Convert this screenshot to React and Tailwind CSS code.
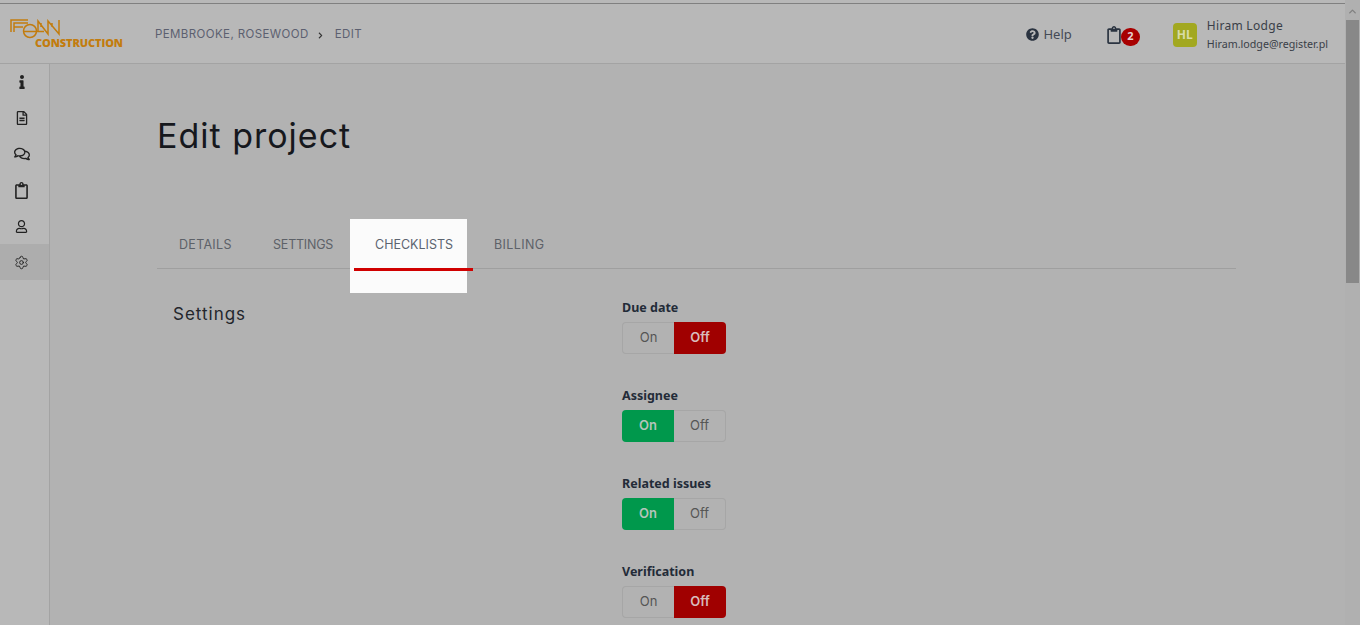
import { Settings, ChevronUp } from "lucide-react";
import { FaInfo, FaRegFileAlt, FaRegComments, FaRegClipboard, FaRegUser, FaQuestionCircle, FaChevronRight } from "react-icons/fa";

const sideItems = [
  { icon: FaRegFileAlt, size: 14 },
  { icon: FaRegComments, size: 16 },
  { icon: FaRegClipboard, size: 17 },
  { icon: FaRegUser, size: 13 },
];

const fields = [
  { label: "Due date", on: false },
  { label: "Assignee", on: true },
  { label: "Related issues", on: true },
  { label: "Verification", on: false },
];

function Logo() {
  return (
    <div className="w-[155px] pl-[10px] shrink-0 mt-[1px]">
      <svg width="52" height="20" viewBox="0 0 52 20" fill="none" stroke="#c27c0e" strokeWidth="1.5" className="block">
        <path d="M1 13V1h17M4 13V4h14M4 8h9" />
        <circle cx="20" cy="12" r="6.5" />
        <path d="M13 12.5h21" />
        <path d="M28 12V2l10 13V2l11 13V1M31 8V4M42 8V4" />
      </svg>
      <div className="pl-[25px] -mt-[2px] font-['Open_Sans',sans-serif] font-extrabold text-[11px] leading-[12px] tracking-[-0.1px] text-[#c27c0e]">
        CONSTRUCTION
      </div>
    </div>
  );
}

function Toggle({ label, on }) {
  return (
    <div className="h-[87px]">
      <div className="text-[12.5px] leading-5 font-bold text-[#232b38] mt-[1px] mb-[4px]">{label}</div>
      <div className="flex w-[104px] h-8 text-[13px] font-['Inter',sans-serif]">
        <div className={`w-[52px] flex items-center justify-center rounded-l ${on ? "bg-[#00984c] text-[#b4c4ba] font-semibold" : "border border-[#a6a6a6] border-r-0 text-[#555555]"}`}>
          On
        </div>
        <div className={`w-[52px] flex items-center justify-center rounded-r ${on ? "border border-[#a6a6a6] border-l-0 text-[#555555]" : "bg-[#a00000] text-[#d8bcbc] font-semibold"}`}>
          Off
        </div>
      </div>
    </div>
  );
}

export default function App() {
  return (
    <div className="h-[625px] overflow-hidden flex bg-[#b2b2b2] font-['Noto_Sans',sans-serif]">
      <div className="flex-1 min-w-0 flex flex-col">
        <div className="h-1 bg-[#b8b8b8] border-b border-[#808080]" />
        <header className="h-[60px] shrink-0 flex items-center border-b border-[#a3a3a3] bg-[#b8b8b8] pr-[17px]">
          <Logo />
          <div className="flex items-center font-['Inter',sans-serif] text-[11.5px] tracking-[0.4px] text-[#5c6070] mt-[3px]">
            <span>PEMBROOKE, ROSEWOOD</span>
            <FaChevronRight size={7} className="ml-[8px] text-[#333333]" />
            <span className="ml-[11px]">EDIT</span>
          </div>
          <div className="ml-auto flex items-center mt-[2px]">
            <FaQuestionCircle size={13} className="text-[#2a3340]" />
            <span className="ml-[4px] text-[13px] text-[#444a55]">Help</span>
            <div className="relative ml-[33px] mr-[33px]">
              <FaRegClipboard size={18} className="text-[#2a3340]" />
              <span className="absolute -right-[17px] top-[2px] w-[19px] h-[18px] rounded-full bg-[#a80000] text-[#e5d0d0] text-[11px] font-bold flex items-center justify-center">
                2
              </span>
            </div>
            <div className="ml-[17px] w-6 h-6 rounded bg-[#a2a820] text-[#d8dca8] text-xs font-bold flex items-center justify-center">
              HL
            </div>
            <div className="ml-[10px] text-[#3a3f48]">
              <div className="text-xs leading-[17px] tracking-[0.3px]">Hiram Lodge</div>
              <div className="text-[10.7px] leading-[17px] mt-[2px]">Hiram.lodge@register.pl</div>
            </div>
          </div>
        </header>
        <div className="flex-1 flex min-h-0">
          <aside className="w-[50px] shrink-0 border-r border-[#a3a3a3] bg-[#b8b8b8] text-[#222222]">
            <div className="h-9 flex items-center justify-center pr-[6px]">
              <FaInfo size={14} />
            </div>
            {sideItems.map(({ icon: Icon, size }, i) => (
              <div key={i} className="h-9 flex items-center justify-center pr-[6px]">
                <Icon size={size} />
              </div>
            ))}
            <div className="h-9 flex items-center justify-center pr-[6px] bg-[#adadad]">
              <Settings size={15} strokeWidth={1.5} />
            </div>
          </aside>
          <main className="flex-1 min-w-0 pl-[107px] pr-[109px]">
            <h1 className="mt-[50px] text-[34px] leading-[44px] tracking-[1px] font-['Inter',sans-serif] text-[#16181d]">Edit project</h1>
            <nav className="relative mt-[61px] h-[50px] border-b border-[#9f9f9f] font-['Inter',sans-serif] text-[12.5px] text-[#5d6168]">
              <span className="absolute left-[22px] top-[17px] tracking-[0.3px]">DETAILS</span>
              <span className="absolute left-[116px] top-[17px] tracking-[-0.2px]">SETTINGS</span>
              <div className="absolute left-[193px] top-0 w-[117px] h-[74px] bg-[#fbfbfb] text-[#5c6470]">
                <span className="absolute left-[25px] top-[17px]">CHECKLISTS</span>
              </div>
              <div className="absolute left-[197px] top-[49px] w-[119px] h-[3px] bg-[#d00000]" />
              <span className="absolute left-[337px] top-[17px] tracking-[0.4px]">BILLING</span>
            </nav>
            <div className="flex pl-4">
              <h2 className="w-[449px] shrink-0 mt-[33px] text-[17px] leading-6 tracking-[1px] font-['Inter',sans-serif] text-[#23262c]">Settings</h2>
              <div className="mt-[28px]">
                {fields.map((f) => (
                  <Toggle key={f.label} label={f.label} on={f.on} />
                ))}
              </div>
            </div>
          </main>
        </div>
      </div>
      <div className="w-[15px] shrink-0 flex flex-col items-center bg-[#b0b0b0] pt-[6px]">
        <ChevronUp size={11} strokeWidth={3} className="text-[#808080]" />
        <div className="mt-[3px] w-[13px] h-[263px] bg-[#888888]" />
      </div>
    </div>
  );
}
